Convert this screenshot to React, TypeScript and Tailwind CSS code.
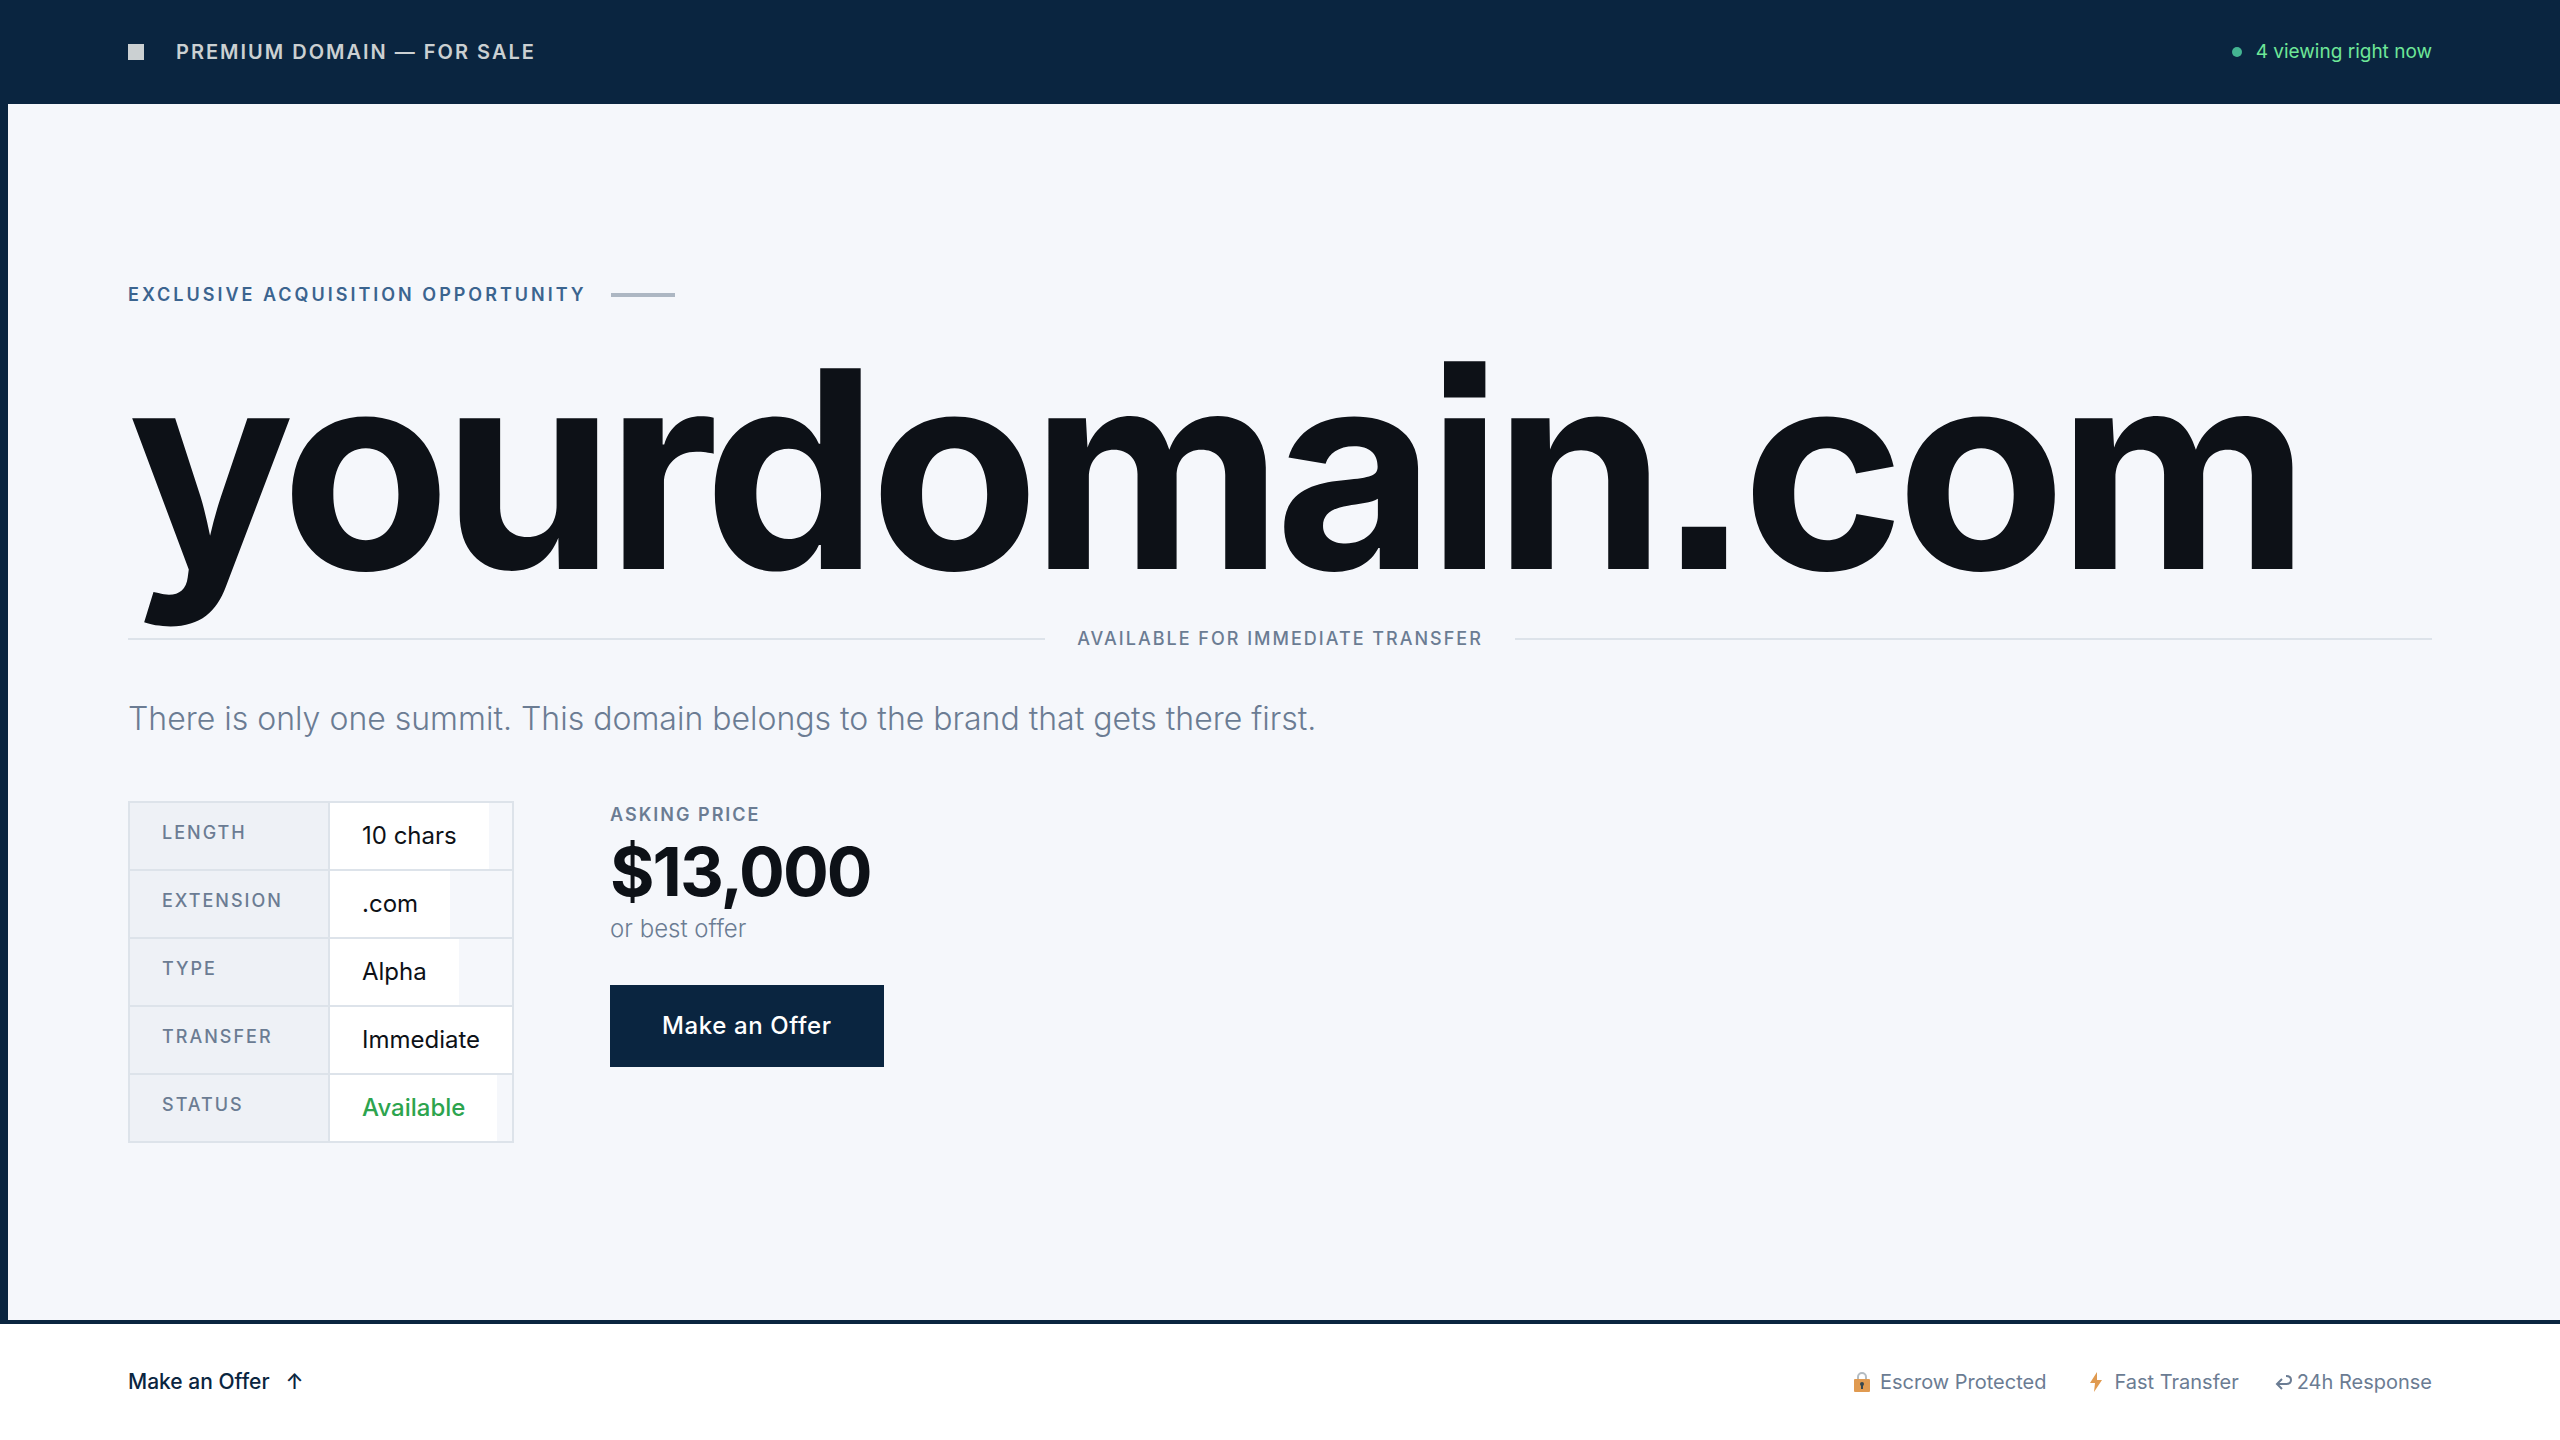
import { clsx } from "clsx";

interface Spec {
  label: string;
  value: string;
  highlight?: boolean;
}

const specs: Spec[] = [
  { label: "Length", value: "10 chars" },
  { label: "Extension", value: ".com" },
  { label: "Type", value: "Alpha" },
  { label: "Transfer", value: "Immediate" },
  { label: "Status", value: "Available", highlight: true },
];

const LockIcon = () => (
  <svg viewBox="0 0 24 20" className="h-5 w-6" aria-hidden="true">
    <path d="M10 8V5a4 4 0 0 1 8 0v3" fill="none" stroke="#b4bcc2" strokeWidth="2" />
    <rect x="6" y="7" width="16" height="13" rx="1" fill="#e09a50" />
    <circle cx="14" cy="12" r="2" fill="#37474f" />
    <path d="M13 12h2v5h-2z" fill="#37474f" />
  </svg>
);

const BoltIcon = () => (
  <svg viewBox="0 0 24 20" className="h-5 w-6" aria-hidden="true">
    <path d="m15 0-7 11h5l-1 9 8-12h-5z" fill="#e09a50" />
  </svg>
);

const ReturnIcon = () => (
  <svg viewBox="0 0 18 16" className="h-4 w-[18px]" fill="none" stroke="currentColor" strokeWidth="2" aria-hidden="true">
    <path d="M11 2c3 0 5 1 5 4s-2 4-5 4H2M7 5l-5 5 5 5" />
  </svg>
);

const Header = () => (
  <header className="flex h-[104px] items-center justify-between bg-[#0a2540] px-32">
    <div className="flex items-center gap-8">
      <span className="size-4 bg-[#cbd0d2]" />
      <p className="text-[20px] font-semibold tracking-[2px] text-[#cbd0d2] uppercase">Premium Domain — For Sale</p>
    </div>
    <p className="flex items-center gap-[14px] text-[19px] text-[#6ee798]">
      <span className="size-[10px] rounded-full bg-[#44b592]" />
      4 viewing right now
    </p>
  </header>
);

const SpecTable = () => (
  <table className="border-collapse border-2 border-[#dde3ea]">
    <tbody>
      {specs.map((spec) => (
        <tr key={spec.label} className="border-2 border-[#dde3ea]">
          <th
            scope="row"
            className="min-w-[200px] border-r-2 border-[#dde3ea] bg-[#eef1f6] px-8 py-4 text-left align-top text-[18px] leading-7 font-medium tracking-[2px] text-[#6b7c93] uppercase"
          >
            {spec.label}
          </th>
          <td className="p-0">
            <div
              className={clsx(
                "w-fit bg-white px-8 py-4 text-[24px] leading-[34px]",
                spec.highlight ? "font-medium text-[#2da44e]" : "font-normal text-[#0d1117]",
              )}
            >
              {spec.value}
            </div>
          </td>
        </tr>
      ))}
    </tbody>
  </table>
);

const Pricing = () => (
  <div className="flex flex-col items-start">
    <p className="text-[18px] leading-7 font-semibold tracking-[2px] text-[#6b7c93] uppercase">Asking Price</p>
    <p className="text-[68px] leading-[84px] font-bold tracking-[-2px] text-[#0d1117]">$13,000</p>
    <p className="text-[24px] leading-8 font-light text-[#6b7c93]">or best offer</p>
    <button
      type="button"
      className="mt-10 bg-[#0a2540] px-13 py-6 text-[24px] leading-[34px] font-medium tracking-wide text-white"
    >
      Make an Offer
    </button>
  </div>
);

const Footer = () => (
  <footer className="flex h-[120px] items-center justify-between border-t-4 border-[#0a2540] bg-white px-32">
    <a href="#offer" className="flex items-center gap-4 text-[21px] font-medium text-[#0a2540]">
      Make an Offer
      <span>↑</span>
    </a>
    <ul className="flex items-center gap-9 text-[20px] text-[#6b7c93]">
      <li className="flex items-center gap-2">
        <LockIcon />
        Escrow Protected
      </li>
      <li className="flex items-center gap-2">
        <BoltIcon />
        Fast Transfer
      </li>
      <li className="flex items-center gap-1">
        <ReturnIcon />
        24h Response
      </li>
    </ul>
  </footer>
);

export default function App() {
  return (
    <div className="flex min-h-screen flex-col bg-[#f5f7fb] font-['Inter',sans-serif]">
      <Header />
      <main className="flex flex-1 flex-col justify-center border-l-8 border-[#0a2540] pr-32 pl-[120px]">
        <div className="flex items-center gap-6">
          <p className="text-[18px] leading-7 font-semibold tracking-[3px] text-[#3b648f] uppercase">
            Exclusive Acquisition Opportunity
          </p>
          <span className="h-1 w-16 bg-[#adb7c3]" />
        </div>
        <h1 className="mt-[34px] text-[276px] leading-[252px] font-bold tracking-[-8px] text-[#0d1117] [font-feature-settings:'ss07']">
          yourdomain.com
        </h1>
        <div className="mt-[30px] flex items-center gap-8">
          <span className="h-[2px] flex-1 bg-[#dde3ea]" />
          <p className="text-[18px] leading-7 font-medium tracking-[2px] text-[#6b7c93] uppercase">
            Available for immediate transfer
          </p>
          <span className="h-[2px] flex-1 bg-[#dde3ea]" />
        </div>
        <p className="mt-10 text-[32px] leading-[52px] font-light text-[#6b7c93]">
          There is only one summit. This domain belongs to the brand that gets there first.
        </p>
        <div className="mt-14 flex items-start gap-24">
          <SpecTable />
          <Pricing />
        </div>
      </main>
      <Footer />
    </div>
  );
}
